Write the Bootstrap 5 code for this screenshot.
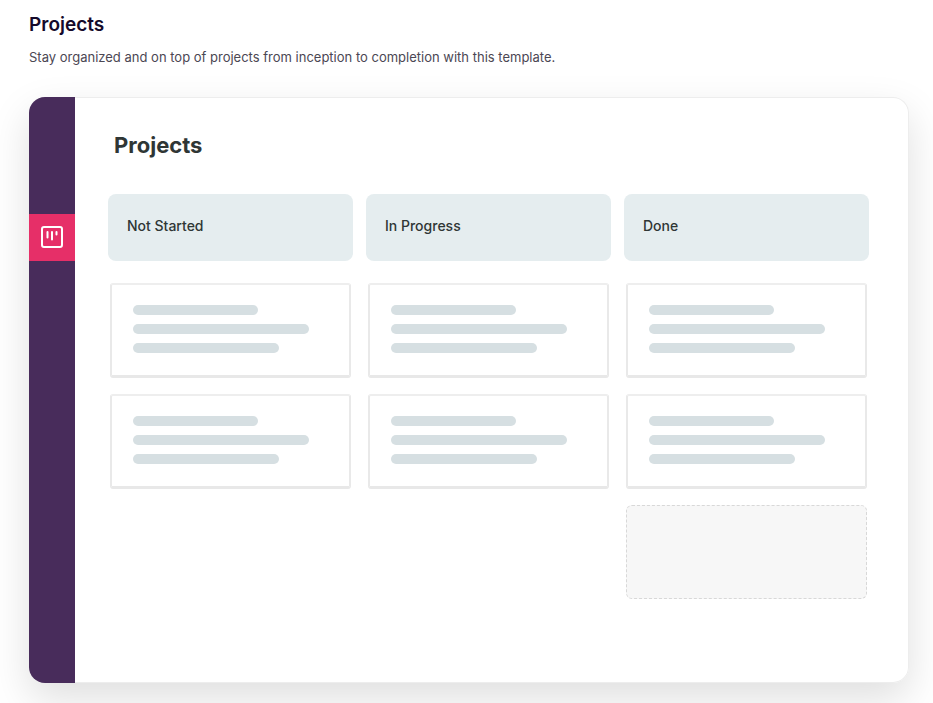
<!DOCTYPE html>
<html lang="en">
<head>
<meta charset="utf-8">
<meta name="viewport" content="width=device-width, initial-scale=1">
<title>Projects</title>
<link href="https://cdn.jsdelivr.net/npm/bootstrap@5.3.0/dist/css/bootstrap.min.css" rel="stylesheet">
<style>
body { font-family: Inter, "Liberation Sans", sans-serif; background: #fff; overflow-x: hidden; }
.page { padding: 12px 24px 20px 29px; }
.page-title { font-size: 19px; line-height: 26px; font-weight: 600; color: #150a2b; }
.page-lead { font-size: 13px; line-height: 22px; color: #4b4753; margin: 8px 0 29px; }
.board { border-radius: 16px; background: #fff; box-shadow: 0 16px 40px rgba(0,0,0,.13), inset 0 0 0 1px #ededed; min-height: 586px; }
.rail { width: 46px; padding-top: 117px; background: #482c5b; }
.rail-link { height: 47px; padding-bottom: 1px; background: #e62f68; color: #fff; }
.board-main { padding: 33px 40px 40px 33px; }
.board-title { font-size: 22px; line-height: 30px; font-weight: 700; color: #2f3635; margin: 0 0 34px 6px; }
.lanes { gap: 13px; }
.lane { flex: 1 1 0; min-width: 0; }
.lane-head { height: 67px; padding: 0 19px 3px; border-radius: 8px; background: #e5edef; font-size: 14px; font-weight: 500; color: #2f3635; }
.tasks { gap: 16px; padding: 22px 2px 0; }
.task { height: 95px; padding: 20px 21px 0; border: 2px solid; border-bottom-width: 3px; border-radius: 3px; border-color: #eeeeee #e9e9e9 #e8e8e8; gap: 9px; }
.stroke { height: 10px; border-radius: 5px; background: #d6dfe2; }
.stroke-1 { width: 64%; }
.stroke-2 { width: 90%; }
.stroke-3 { width: 75%; }
.drop-zone { height: 94px; border: 1px dashed #d8d8d8; border-radius: 6px; background: #f7f7f7; }
</style>
</head>
<body>
<main class="page">
  <h1 class="page-title mb-0">Projects</h1>
  <p class="page-lead">Stay organized and on top of projects from inception to completion with this template.</p>
  <section class="board d-flex overflow-hidden">
    <nav class="rail flex-shrink-0" aria-label="Boards">
      <a href="#" class="rail-link d-flex align-items-center justify-content-center" aria-label="Projects board">
        <svg width="22" height="22" viewBox="0 0 22 22" fill="none" stroke="currentColor" stroke-width="2" stroke-linecap="round"><rect x="1" y="1" width="20" height="20" rx="2"/><path d="M6.500 6v5.500M11 6v7.500M15.500 6v2.500"/></svg>
      </a>
    </nav>
    <div class="board-main flex-grow-1">
      <h2 class="board-title">Projects</h2>
      <div class="lanes d-flex">
        <div class="lane">
          <h3 class="lane-head d-flex align-items-center mb-0">Not Started</h3>
          <div class="tasks d-flex flex-column">
            <div class="task d-flex flex-column"><div class="stroke stroke-1"></div><div class="stroke stroke-2"></div><div class="stroke stroke-3"></div></div>
            <div class="task d-flex flex-column"><div class="stroke stroke-1"></div><div class="stroke stroke-2"></div><div class="stroke stroke-3"></div></div>
          </div>
        </div>
        <div class="lane">
          <h3 class="lane-head d-flex align-items-center mb-0">In Progress</h3>
          <div class="tasks d-flex flex-column">
            <div class="task d-flex flex-column"><div class="stroke stroke-1"></div><div class="stroke stroke-2"></div><div class="stroke stroke-3"></div></div>
            <div class="task d-flex flex-column"><div class="stroke stroke-1"></div><div class="stroke stroke-2"></div><div class="stroke stroke-3"></div></div>
          </div>
        </div>
        <div class="lane">
          <h3 class="lane-head d-flex align-items-center mb-0">Done</h3>
          <div class="tasks d-flex flex-column">
            <div class="task d-flex flex-column"><div class="stroke stroke-1"></div><div class="stroke stroke-2"></div><div class="stroke stroke-3"></div></div>
            <div class="task d-flex flex-column"><div class="stroke stroke-1"></div><div class="stroke stroke-2"></div><div class="stroke stroke-3"></div></div>
            <div class="drop-zone"></div>
          </div>
        </div>
      </div>
    </div>
  </section>
</main>
<script src="https://cdn.jsdelivr.net/npm/bootstrap@5.3.0/dist/js/bootstrap.bundle.min.js"></script>
</body>
</html>
